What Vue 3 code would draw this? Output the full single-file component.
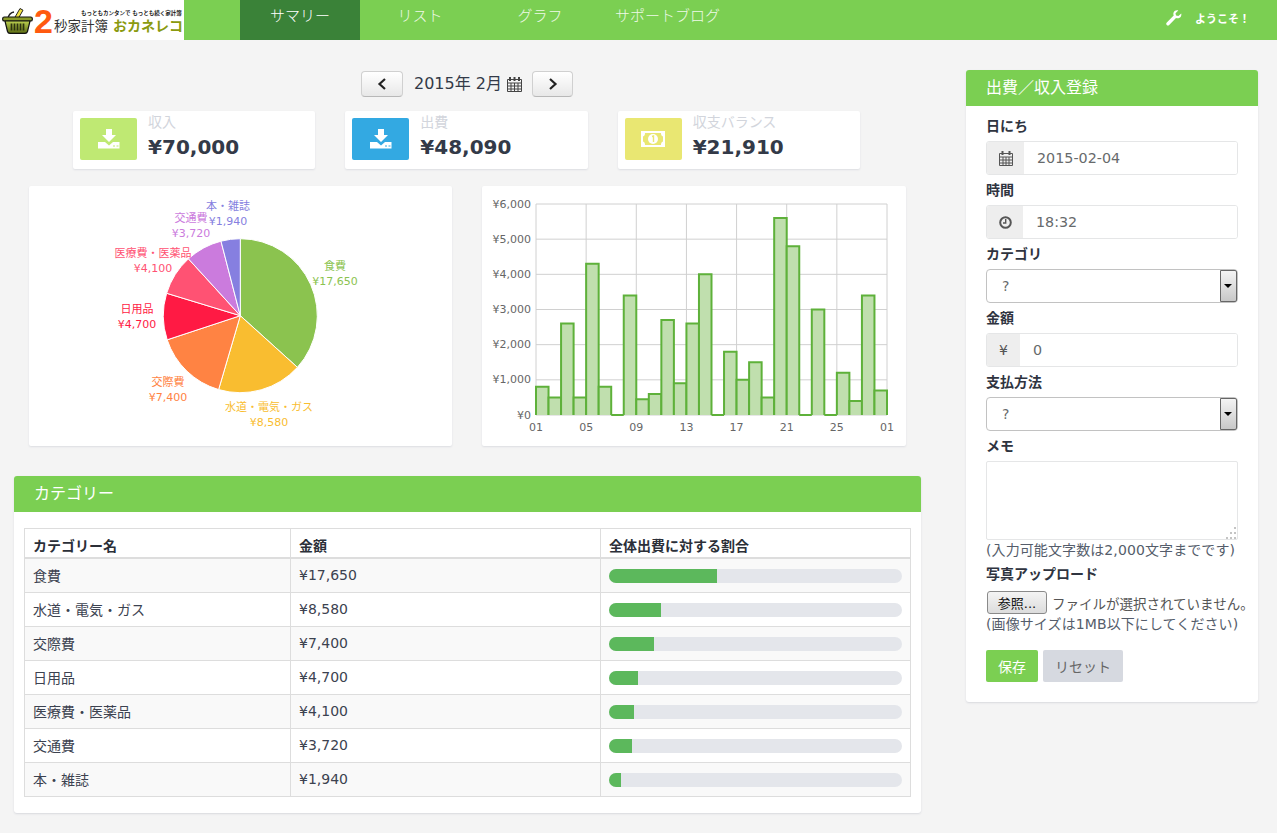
<script setup>
import { ref, computed } from 'vue'

const categories = [
  { name: '食費', amount: 17650, color: '#8bc34f', cx: 306, ty: 80 },
  { name: '水道・電気・ガス', amount: 8580, color: '#f9bd30', cx: 240, ty: 221 },
  { name: '交際費', amount: 7400, color: '#ff8343', cx: 139, ty: 196 },
  { name: '日用品', amount: 4700, color: '#ff1a44', cx: 108, ty: 123 },
  { name: '医療費・医薬品', amount: 4100, color: '#ff5273', cx: 124, ty: 67 },
  { name: '交通費', amount: 3720, color: '#cb7bdd', cx: 162, ty: 32 },
  { name: '本・雑誌', amount: 1940, color: '#867fe0', cx: 199, ty: 20 }
]
const daily = [800, 500, 2600, 500, 4300, 800, 0, 3400, 450, 600, 2700, 900, 2600, 4000, 0, 1800, 1000, 1500, 500, 5600, 4800, 0, 3000, 0, 1200, 400, 3400, 700]

const navItems = ['サマリー', 'リスト', 'グラフ', 'サポートブログ']
const total = categories.reduce((s, c) => s + c.amount, 0)
const yen = (v) => '¥' + v.toLocaleString('en-US')
const percent = (v) => (v / total) * 100

// 円グラフ
const slices = computed(() => {
  const cx = 211.3, cy = 129.7, r = 77
  let a = -Math.PI / 2
  return categories.map((c) => {
    const next = a + (c.amount / total) * Math.PI * 2
    const large = next - a > Math.PI ? 1 : 0
    const d = `M${cx} ${cy}L${cx + r * Math.cos(a)} ${cy + r * Math.sin(a)}A${r} ${r} 0 ${large} 1 ${cx + r * Math.cos(next)} ${cy + r * Math.sin(next)}Z`
    a = next
    return { ...c, d }
  })
})

// 棒グラフ
const plot = { left: 54, right: 405, top: 18, bottom: 229 }
const stepX = (plot.right - plot.left) / 28
const stepY = (plot.bottom - plot.top) / 6
const yTicks = [0, 1, 2, 3, 4, 5, 6].map((i) => ({ label: yen(i * 1000), y: plot.bottom - i * stepY }))
const xTicks = ['01', '05', '09', '13', '17', '21', '25', '01'].map((label, i) => ({ label, x: plot.left + i * 4 * stepX }))
const bars = daily.map((v, i) => {
  const x = plot.left + i * stepX
  const y = plot.bottom - (v / 6000) * (plot.bottom - plot.top)
  return {
    rect: { x, y, width: stepX, height: plot.bottom - y },
    line: `M${x} ${plot.bottom}V${y}H${x + stepX}V${plot.bottom}`
  }
})

const date = ref('2015-02-04')
const time = ref('18:32')
const amount = ref('0')
const memo = ref('')
</script>

<template>
  <div class="page">
    <header class="navbar">
      <div class="logo">
        <svg class="logo-basket" width="31" height="27" viewBox="0 0 31 27">
          <defs>
            <linearGradient id="basket-body" x1="0" y1="0" x2="0" y2="1">
              <stop offset="0" stop-color="#bcd050" />
              <stop offset="1" stop-color="#5c6c14" />
            </linearGradient>
          </defs>
          <path d="M12.5 11 L18 1.5 L21 3.2 L16 12Z" fill="#f0e040" stroke="#222" stroke-width="1" />
          <path d="M6 11 C7 7 9 5.5 12 5" fill="none" stroke="#222" stroke-width="1.4" />
          <rect x=".7" y="10" width="29.6" height="4" rx="1.6" fill="#8a9a28" stroke="#111" stroke-width="1.2" />
          <path d="M3 14 H28 L25.5 24.5 Q25 26.4 23 26.4 H8 Q6 26.4 5.5 24.5Z" fill="url(#basket-body)" stroke="#111" stroke-width="1.2" />
          <path d="M9.5 16.5V23.5M12.5 16.5V23.5M15.5 16.5V23.5M18.5 16.5V23.5M21.5 16.5V23.5" stroke="#2c3210" stroke-width="1.7" />
        </svg>
        <span class="logo-two">2</span>
        <div class="logo-text">
          <div class="logo-catch">もっともカンタンで もっとも続く家計簿</div>
          <div class="logo-main"><span class="logo-sec">秒家計簿</span><span class="logo-name">おカネレコ</span></div>
        </div>
      </div>
      <nav class="nav-menu">
        <a v-for="(item, i) in navItems" :key="item" class="nav-item" :class="{ active: i === 0 }">{{ item }}</a>
      </nav>
      <div class="welcome">
        <svg width="16" height="16" viewBox="0 0 16 16">
          <path d="M15.2 3.4 L12.4 6.1 L10 5.6 L9.5 3.2 L12.3 .6 C10.4 -.1 8.3 .8 7.6 2.6 C7.2 3.6 7.3 4.7 7.7 5.6 L.8 12.4 C0 13.2 0 14.2 .7 14.9 C1.4 15.6 2.5 15.6 3.2 14.9 L10 8 C11.9 8.9 14.1 8.1 15 6.2 C15.4 5.3 15.5 4.3 15.2 3.4Z" fill="#fff" />
        </svg>
        <span>ようこそ！</span>
      </div>
    </header>

    <main class="content">
      <div class="left-col">
        <div class="month-row">
          <button class="month-btn">
            <svg width="10" height="12" viewBox="0 0 10 12"><path d="M8 1 L2.5 6 L8 11" fill="none" stroke="#222" stroke-width="2.2" /></svg>
          </button>
          <span class="month-label">2015年 2月</span>
          <svg class="month-cal" width="15" height="16" viewBox="0 0 15 16">
            <path d="M.5 3.5H14.5V15.5H.5ZM.5 7H14.5M.5 10H14.5M.5 13H14.5M4 7V15.5M7.5 7V15.5M11 7V15.5" fill="none" stroke="#444" />
            <path d="M3 1V5M7.5 1V5M12 1V5" stroke="#444" stroke-width="2" />
          </svg>
          <button class="month-btn next">
            <svg width="10" height="12" viewBox="0 0 10 12"><path d="M2 1 L7.5 6 L2 11" fill="none" stroke="#222" stroke-width="2.2" /></svg>
          </button>
        </div>

        <div class="summary-row">
          <div class="summary-card">
            <div class="summary-icon green">
              <svg width="22" height="20" viewBox="0 0 22 20">
                <path d="M8 0H14V6H18L11 13L4 6H8Z" fill="#fff" />
                <path d="M0 13H7L11 16.5L15 13H21.5V19.5H0Z" fill="#fff" />
                <path d="M15 17H17M18.5 17H20.5" stroke="#bfe973" />
              </svg>
            </div>
            <div>
              <div class="summary-label">収入</div>
              <div class="summary-value">¥70,000</div>
            </div>
          </div>
          <div class="summary-card">
            <div class="summary-icon blue">
              <svg width="22" height="20" viewBox="0 0 22 20">
                <path d="M8 0H14V6H18L11 13L4 6H8Z" fill="#fff" />
                <path d="M0 13H7L11 16.5L15 13H21.5V19.5H0Z" fill="#fff" />
                <path d="M15 17H17M18.5 17H20.5" stroke="#33a9e2" />
              </svg>
            </div>
            <div>
              <div class="summary-label">出費</div>
              <div class="summary-value">¥48,090</div>
            </div>
          </div>
          <div class="summary-card">
            <div class="summary-icon yellow">
              <svg width="24" height="16" viewBox="0 0 24 16">
                <path fill-rule="evenodd" d="M0 0H24V16H0ZM4 2 C4 4 3.5 5 2 5.5V10.5C3.5 11 4 12 4 14H20C20 12 20.5 11 22 10.5V5.5C20.5 5 20 4 20 2Z" fill="#fff" />
                <circle cx="12" cy="8" r="5" fill="#fff" />
                <path d="M11 5.5L12.5 5V11" fill="none" stroke="#e9e772" stroke-width="1.4" />
              </svg>
            </div>
            <div>
              <div class="summary-label">収支バランス</div>
              <div class="summary-value">¥21,910</div>
            </div>
          </div>
        </div>

        <div class="chart-row">
          <div class="chart-card">
            <svg width="423" height="260" class="chart-svg">
              <path v-for="s in slices" :key="s.name" :d="s.d" :fill="s.color" stroke="#fff" stroke-width="1" />
              <g v-for="s in slices" :key="s.name + '-label'" :fill="s.color" text-anchor="middle" class="chart-text">
                <text :x="s.cx" :y="s.ty" dominant-baseline="central">{{ s.name }}</text>
                <text :x="s.cx" :y="s.ty + 15" dominant-baseline="central">{{ yen(s.amount) }}</text>
              </g>
            </svg>
          </div>
          <div class="chart-card">
            <svg width="424" height="260" class="chart-svg">
              <g stroke="#d0d0d0" stroke-width="1">
                <line v-for="t in yTicks" :key="t.y" :x1="plot.left" :x2="plot.right" :y1="t.y" :y2="t.y" />
                <line v-for="t in xTicks" :key="t.x" :x1="t.x" :x2="t.x" :y1="plot.top" :y2="plot.bottom" />
              </g>
              <g v-for="(b, i) in bars" :key="i">
                <rect v-bind="b.rect" fill="#c0dfae" />
                <path :d="b.line" fill="none" stroke="#5eb13a" stroke-width="2" />
              </g>
              <g class="chart-text" fill="#666">
                <text v-for="t in yTicks" :key="t.label" :x="plot.left - 5" :y="t.y" text-anchor="end" dominant-baseline="central">{{ t.label }}</text>
                <text v-for="t in xTicks" :key="t.x" :x="t.x" y="241" text-anchor="middle" dominant-baseline="central">{{ t.label }}</text>
              </g>
            </svg>
          </div>
        </div>

        <section class="panel category-panel">
          <h2 class="panel-title">カテゴリー</h2>
          <div class="category-body">
            <table class="category-table">
              <colgroup>
                <col class="col-name" />
                <col class="col-amount" />
                <col />
              </colgroup>
              <thead>
                <tr>
                  <th>カテゴリー名</th>
                  <th>金額</th>
                  <th>全体出費に対する割合</th>
                </tr>
              </thead>
              <tbody>
                <tr v-for="c in categories" :key="c.name">
                  <td>{{ c.name }}</td>
                  <td>{{ yen(c.amount) }}</td>
                  <td>
                    <div class="progress">
                      <div class="progress-bar" :style="{ width: percent(c.amount) + '%' }"></div>
                    </div>
                  </td>
                </tr>
              </tbody>
            </table>
          </div>
        </section>
      </div>

      <aside class="panel form-panel">
        <h2 class="panel-title">出費／収入登録</h2>
        <form class="form-body" @submit.prevent>
          <label class="form-label">日にち</label>
          <div class="input-group">
            <span class="addon date-addon">
              <svg width="14" height="15" viewBox="0 0 14 15">
                <path d="M.5 2.5H13.5V14.5H.5ZM.5 6H13.5M.5 9H13.5M.5 12H13.5M4 6V14.5M7 6V14.5M10 6V14.5" fill="none" stroke="#555" />
                <path d="M3.5 0V4M10.5 0V4" stroke="#555" stroke-width="2" />
              </svg>
            </span>
            <input v-model="date" class="text-input" />
          </div>

          <label class="form-label">時間</label>
          <div class="input-group">
            <span class="addon time-addon">
              <svg width="13" height="13" viewBox="0 0 13 13">
                <circle cx="6.5" cy="6.5" r="5.3" fill="none" stroke="#555" stroke-width="2" />
                <path d="M6.7 3V7H4" fill="none" stroke="#555" stroke-width="1.4" />
              </svg>
            </span>
            <input v-model="time" class="text-input" />
          </div>

          <label class="form-label">カテゴリ</label>
          <div class="select-box">
            <select class="select-input"><option>?</option></select>
            <span class="select-arrow"></span>
          </div>

          <label class="form-label">金額</label>
          <div class="input-group">
            <span class="addon yen-addon">¥</span>
            <input v-model="amount" class="text-input" />
          </div>

          <label class="form-label">支払方法</label>
          <div class="select-box">
            <select class="select-input"><option>?</option></select>
            <span class="select-arrow"></span>
          </div>

          <label class="form-label">メモ</label>
          <div class="memo-box">
            <textarea v-model="memo" class="memo-input"></textarea>
            <svg class="memo-grip" width="11" height="13" viewBox="0 0 11 13" fill="#c4c4c4">
              <rect x="8" y="0" width="2" height="2" /><rect x="4" y="5" width="2" height="2" /><rect x="8" y="5" width="2" height="2" />
              <rect x="0" y="10" width="2" height="2" /><rect x="4" y="10" width="2" height="2" /><rect x="8" y="10" width="2" height="2" />
            </svg>
          </div>
          <p class="form-note">(入力可能文字数は2,000文字までです)</p>

          <label class="form-label upload-label">写真アップロード</label>
          <div class="file-row">
            <button type="button" class="file-btn">参照...</button>
            <span class="file-name">ファイルが選択されていません。</span>
          </div>
          <p class="form-note">(画像サイズは1MB以下にしてください)</p>

          <div class="form-actions">
            <button class="btn btn-save">保存</button>
            <button type="reset" class="btn btn-reset">リセット</button>
          </div>
        </form>
      </aside>
    </main>
  </div>
</template>

<style>
html, body {
  margin: 0;
  background: #f4f4f4;
}
</style>

<style scoped>
.page {
  min-height: 833px;
  background: #f4f4f4;
  color: #333a48;
  font-family: "DejaVu Sans", "Noto Sans CJK JP", sans-serif;
  font-size: 14px;
}

/* ヘッダー */
.navbar {
  display: flex;
  height: 40px;
  background: #7bcf52;
  color: #fff;
}
.logo {
  display: flex;
  width: 184px;
  height: 40px;
  background: #fff;
  overflow: hidden;
}
.logo-basket {
  flex: none;
  margin: 7px 1px 0 2px;
}
.logo-two {
  margin-top: 2px;
  color: #ff5a10;
  font-family: "Liberation Sans", sans-serif;
  font-size: 34px;
  font-weight: 700;
  line-height: 38px;
}
.logo-text {
  margin-left: 1px;
}
.logo-catch {
  margin: 10px 0 0 27px;
  color: #222;
  font-size: 5.5px;
  font-weight: 700;
  line-height: 7px;
  white-space: nowrap;
}
.logo-main {
  display: flex;
  align-items: center;
  white-space: nowrap;
  line-height: 19px;
}
.logo-sec {
  color: #333;
  font-size: 13.5px;
  margin-right: 5px;
}
.logo-name {
  color: #8a9a10;
  font-size: 14px;
  font-weight: 700;
}
.nav-menu {
  display: flex;
  margin-left: 56px;
}
.nav-item {
  width: 120px;
  text-align: center;
  font-size: 15px;
  line-height: 33px;
  height: 40px;
  font-weight: 300;
  color: #eef9e8;
}
.nav-item:last-child {
  width: 135px;
}
.nav-item.active {
  background: #3a8238;
  color: #fff;
}
.welcome {
  display: flex;
  align-items: center;
  gap: 13px;
  margin-left: auto;
  padding-right: 27px;
  height: 36px;
  font-size: 11px;
  font-weight: 700;
}

/* レイアウト */
.content {
  display: flex;
  align-items: flex-start;
  gap: 45px;
  padding: 30px 0 20px 14px;
}
.left-col {
  width: 907px;
  flex: none;
}
.month-row {
  display: flex;
  justify-content: center;
  align-items: center;
  height: 26px;
  margin: 1px 1px 0 0;
}
.month-btn {
  display: flex;
  align-items: center;
  justify-content: center;
  width: 42px;
  height: 26px;
  padding: 0;
  background: linear-gradient(#ffffff, #e8e8e8);
  border: 1px solid #d0d0d0;
  border-bottom-color: #b8b8b8;
  border-radius: 4px;
}
.month-btn.next {
  width: 41px;
  margin-left: 10px;
}
.month-label {
  margin-left: 11px;
  font-size: 16px;
  line-height: 26px;
}
.month-cal {
  margin-left: 5px;
}

.summary-row {
  display: flex;
  justify-content: center;
  gap: 30px;
  margin: 14px 2px 0 0;
}
.summary-card {
  display: flex;
  gap: 11px;
  width: 242.3px;
  height: 58px;
  padding: 7px;
  box-sizing: border-box;
  background: #fff;
  border-radius: 2px;
  box-shadow: 0 1px 2px #dcdde2;
}
.summary-icon {
  display: flex;
  align-items: center;
  justify-content: center;
  flex: none;
  width: 57px;
  height: 42px;
  border-radius: 2px;
}
.summary-icon.green { background: #bfe973; }
.summary-icon.blue { background: #33a9e2; }
.summary-icon.yellow { background: #e9e772; }
.summary-label {
  color: #d2d5dc;
  font-size: 14px;
  line-height: 16px;
  margin-top: -4px;
}
.summary-value {
  color: #333a48;
  font-size: 20px;
  font-weight: 700;
  line-height: 28px;
  margin-top: 3px;
}

.chart-row {
  display: flex;
  justify-content: center;
  gap: 30px;
  margin-top: 17px;
}
.chart-card {
  height: 260px;
  background: #fff;
  border-radius: 2px;
  box-shadow: 0 1px 2px #dcdde2;
}
.chart-svg {
  display: block;
}
.chart-text {
  font-size: 11px;
}

.panel {
  background: #fff;
  border-radius: 3px;
  box-shadow: 0 1px 2px #d8d9de;
}
.panel-title {
  margin: 0;
  height: 36px;
  padding-left: 20px;
  background: #7bcf52;
  border-radius: 3px 3px 0 0;
  color: #fff;
  font-size: 16px;
  font-weight: 400;
  line-height: 36px;
}
.category-panel {
  margin-top: 30px;
}
.category-body {
  padding: 16px 10px;
}
.category-table {
  width: 887px;
  border-collapse: collapse;
  table-layout: fixed;
}
.col-name {
  width: 266px;
}
.col-amount {
  width: 310px;
}
.category-table th,
.category-table td {
  border: 1px solid #ddd;
  padding: 0 8px;
  text-align: left;
}
.category-table th {
  height: 29px;
  border-bottom-width: 2px;
  color: #2b2f38;
  font-weight: 700;
  font-size: 14px;
  line-height: 20px;
  padding-top: 6px;
  box-sizing: border-box;
}
.category-table td {
  height: 33px;
  color: #3c4250;
}
.category-table tbody tr:nth-child(odd) {
  background: #f9f9f9;
}
.progress {
  height: 14px;
  margin-top: 1px;
  background: #e4e6eb;
  border-radius: 7px;
  overflow: hidden;
}
.progress-bar {
  height: 100%;
  background: #5cb85c;
}

/* 入力フォーム */
.form-panel {
  width: 292px;
  flex: none;
}
.form-body {
  padding: 5px 20px 20px;
}
.form-label {
  display: block;
  height: 30px;
  color: #2f3440;
  font-weight: 700;
  line-height: 30px;
}
.input-group {
  display: flex;
  height: 34px;
  box-sizing: border-box;
  border: 1px solid #e5e6e7;
  border-radius: 3px;
  overflow: hidden;
  background: #fff;
}
.addon {
  display: flex;
  align-items: center;
  justify-content: center;
  flex: none;
  background: #eeeeee;
  color: #555;
}
.date-addon { width: 37px; }
.time-addon { width: 36px; }
.yen-addon { width: 33px; }
.text-input {
  flex: 1;
  min-width: 0;
  padding: 0 13px;
  border: 0;
  outline: none;
  background: #fff;
  color: #676a6c;
  font: inherit;
  font-size: 14.3px;
}
.select-box {
  position: relative;
  height: 34px;
}
.select-input {
  display: block;
  width: 100%;
  height: 34px;
  padding: 0 0 0 15px;
  appearance: none;
  box-sizing: border-box;
  background: #fff;
  border: 1px solid #c2c2c2;
  border-radius: 4px;
  color: #676a6c;
  font: inherit;
}
.select-arrow {
  position: absolute;
  top: 1px;
  right: 1px;
  width: 15px;
  height: 30px;
  border: 1px solid #666;
  border-radius: 0 2px 2px 0;
  background: linear-gradient(#f4f4f4, #c8c8c8);
}
.select-arrow::after {
  content: "";
  position: absolute;
  top: 13px;
  left: 3px;
  border: 4px solid transparent;
  border-top: 4px solid #000;
}
.memo-box {
  position: relative;
  height: 79px;
}
.memo-input {
  display: block;
  width: 100%;
  height: 79px;
  box-sizing: border-box;
  border: 1px solid #e5e6e7;
  border-radius: 2px;
  outline: none;
  resize: none;
}
.memo-grip {
  position: absolute;
  right: 1px;
  bottom: 0;
}
.form-note {
  margin: 0;
  color: #555d6b;
  line-height: 21px;
  letter-spacing: 0.1px;
  white-space: nowrap;
}
.upload-label {
  height: 26px;
  margin-top: 1px;
  line-height: 24px;
}
.file-row {
  display: flex;
  align-items: center;
  height: 23px;
  margin-top: 3px;
  white-space: nowrap;
}
.file-btn {
  flex: none;
  width: 60px;
  height: 23px;
  margin-left: 1px;
  padding: 0;
  background: linear-gradient(#f4f4f4, #dcdcdc);
  border: 1px solid #8a8a8a;
  border-radius: 3px;
  color: #111;
  font: inherit;
  font-size: 13px;
}
.file-name {
  margin-left: 5px;
  color: #555;
  font-size: 13.5px;
}
.form-actions {
  display: flex;
  gap: 5px;
  margin-top: 15px;
}
.btn {
  height: 32px;
  border: 0;
  border-radius: 2px;
  font: inherit;
  font-size: 14px;
  padding: 0;
}
.btn-save {
  width: 52px;
  background: #7bcf52;
  color: #fff;
}
.btn-reset {
  width: 80px;
  background: #d6d9e0;
  color: #666;
}
</style>
